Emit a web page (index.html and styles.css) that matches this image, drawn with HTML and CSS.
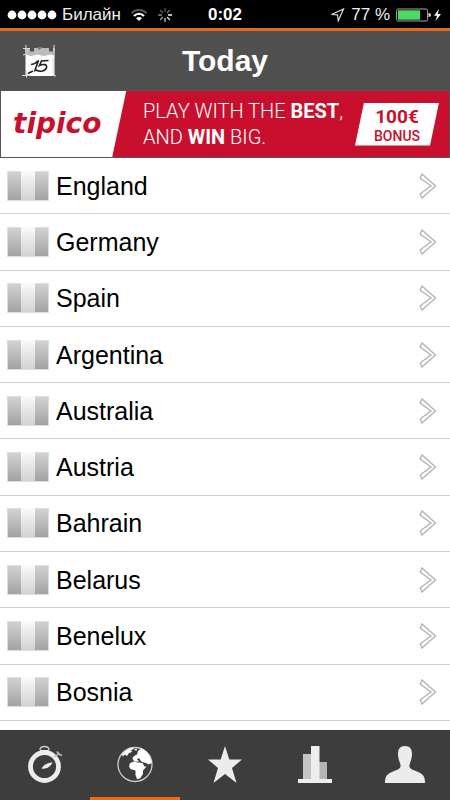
FILE: index.html
```html
<!DOCTYPE html>
<html lang="en">
<head>
<meta charset="utf-8">
<meta name="viewport" content="width=device-width, initial-scale=1">
<title>Today</title>
<link rel="stylesheet" href="styles.css">
</head>
<body>
<div class="status">
  <div class="status-left">
    <svg class="signal" width="48" height="10" viewBox="0 0 48 10" fill="#fff" aria-hidden="true"><circle cx="4" cy="5" r="4.400"/><circle cx="14" cy="5" r="4.400"/><circle cx="24" cy="5" r="4.400"/><circle cx="34" cy="5" r="4.400"/><circle cx="44" cy="5" r="4.400"/></svg>
    <span class="carrier">Билайн</span>
    <svg class="wifi" width="18" height="14" viewBox="0 0 18 14" fill="none" aria-hidden="true"><path d="M1.500 5.200C5.500 1 12.500 1 16.500 5.200" stroke="#555" stroke-width="2"/><path d="M4 8C6.800 5 11.200 5 14 8" stroke="#fff" stroke-width="2.200"/><path d="M6 10.200Q9 7.700 12 10.200L9 13Z" fill="#fff"/></svg>
    <svg width="16" height="16" viewBox="0 0 16 16" stroke-width="1.300" stroke-linecap="round" aria-hidden="true"><path d="M8 1.500V4.500" stroke="#555"/><path d="M12.600 3.400L10.500 5.500" stroke="#777"/><path d="M14.500 8H11.500" stroke="#fff"/><path d="M12.600 12.600L10.500 10.500" stroke="#eee"/><path d="M8 14.500V11.500" stroke="#ccc"/><path d="M3.400 12.600L5.500 10.500" stroke="#aaa"/><path d="M1.500 8H4.500" stroke="#888"/><path d="M3.400 3.400L5.500 5.500" stroke="#666"/></svg>
  </div>
  <time class="clock">0:02</time>
  <div class="status-right">
    <svg width="15" height="14" viewBox="0 0 15 14" fill="none" stroke="#ddd" stroke-width="1.200" aria-hidden="true"><path d="M1.500 6.500L13.500 1L8.200 13L7.600 6.800Z"/></svg>
    <span class="percent">77 %</span>
    <svg width="46" height="14" viewBox="0 0 46 14" aria-hidden="true"><rect x=".6" y="1" width="31" height="12" rx="1.500" fill="none" stroke="#aaa"/><path d="M2 2.300H24V11.700H2Z" fill="#4cd964"/><path d="M32.500 5Q35 5 35 7T32.500 9Z" fill="#ddd"/><path d="M43 1L38 7.700H41L39.600 13L45 6H41.800Z" fill="#fff"/></svg>
  </div>
</div>
<header class="header">
  <button class="calendar" aria-label="Choose date">
    <svg width="34" height="34" viewBox="0 0 34 34" aria-hidden="true"><path d="M3.500 4H32.500V32H3.500Z" fill="#fff"/><path d="M3.500 4H32.500V11.500L28 10.500L22 12L15 10.500L9 12L3.500 10.500Z" fill="#bbb"/><path d="M8 3H12V7.500H8ZM27 3H31V7.500H27Z" fill="#505050"/><path d="M1 4.500H8M1 11L5 10M4 1V8M32 1V7M0 31.500H9M4.500 27V33.500M30 31L34 32M31 14V30" stroke="#ddd" stroke-width="1"/><path d="M15 3L17 6L21 3" fill="#777"/><path d="M9 20.500Q13.500 20 16.500 16.500L12.500 27.500M26.500 16.500L19.500 17L17.500 21.500C21.500 19.500 25.500 20.500 24.500 23.500C23.500 27 18.500 28.500 14 26M6 29.500L11 27" fill="none" stroke="#222" stroke-width="1.600"/></svg>
  </button>
  <h1 class="title">Today</h1>
</header>
<a class="banner" href="#bonus">
  <span class="brand">tipico</span>
  <span class="slogan">PLAY WITH THE <b>BEST</b>,<br>AND <b>WIN</b> BIG.</span>
  <span class="bonus"><b>100€</b><span>BONUS</span></span>
</a>
<main class="main">
  <ul class="list" id="countries"></ul>
</main>
<nav class="tabs" aria-label="Main">
  <a class="tab" href="#live" aria-label="Live"><svg width="36" height="38" viewBox="0 0 36 38" fill="none" aria-hidden="true"><circle cx="17.500" cy="21.500" r="14" stroke="#ececec" stroke-width="4.800"/><path d="M13 5C12.500 .300 22.500 .300 22 5" stroke="#ccc" stroke-width="1.500"/><path d="M13.500 5H21.500L22.500 8H12.500Z" fill="#ececec"/><path d="M27.500 12L32.500 8M30 6.500L31.500 9L35 10.500" stroke="#bbb" stroke-width="1.600"/><path d="M14.500 23.500C16.500 20 20.500 17.500 25.500 17.500C23.500 21.500 19.500 24.500 14.500 23.500Z" fill="#ececec"/></svg></a>
  <a class="tab tab-active" href="#countries" aria-label="Countries" aria-current="page"><svg width="36" height="38" viewBox="0 0 36 38" aria-hidden="true"><circle cx="18" cy="19.500" r="17" fill="none" stroke="#ccc" stroke-width="1.300"/><path d="M5 9C8 5.500 12 3 16 2.700L17 4L14 5L15 7L12 8L10 11L8 9.500L5.500 11.500ZM17 4.500L20 3.500L19.500 6ZM16 15L15.500 12.500L18 10.500L20 9.500L21 6L24 3.500C30 6 34 11 34.800 18L31.500 19.500L29 18L25 17L23.500 15.500L22 13L20 14.500L22.500 16.500H18ZM13 18L17 16.500L21 17.500L25.500 18L27.500 21.500H29.500L26 25.500V29L23 33.500L20 34L18.500 30V25.500L13.500 24L12 21.500Z" fill="#fff"/></svg></a>
  <a class="tab" href="#favorites" aria-label="Favorites"><svg width="36" height="38" viewBox="0 0 36 38" aria-hidden="true"><path d="M18 1L22.300 14.500H35L25 23L29.500 38L18 29L6.500 38L11 23L1 14.500H13.700Z" fill="#ececec"/></svg></a>
  <a class="tab" href="#tables" aria-label="Tables"><svg width="36" height="38" viewBox="0 0 36 38" aria-hidden="true"><path d="M6 9H14V34H6Z" fill="#c4c4c4"/><path d="M22 17H30V34H22Z" fill="#b5b5b5"/><path d="M14 1H22.500V34H14ZM1 34H35V38H1Z" fill="#eee"/></svg></a>
  <a class="tab" href="#profile" aria-label="Profile"><svg width="40" height="38" viewBox="0 0 40 38" aria-hidden="true"><path d="M20 1C15 1 13 4 13 9C13 14 15 17 15.500 20C16 24 13 24.500 8 26.500C2 29 0 31 0 38H40C40 31 38 29 32 26.500C27 24.500 24 24 24.500 20C25 17 27 14 27 9C27 4 25 1 20 1Z" fill="#ececec"/></svg></a>
</nav>
<script src="list.js"></script>
</body>
</html>
```

FILE: styles.css
```css
* {
  box-sizing: border-box;
}

body {
  display: flex;
  flex-direction: column;
  min-height: 100vh;
  margin: 0;
  background: #fff;
  color: #000;
  font-family: "Liberation Sans", Arial, sans-serif;
}

a {
  color: inherit;
  text-decoration: none;
}

svg {
  display: block;
  flex: none;
}

.status {
  display: grid;
  grid-template-columns: 1fr auto 1fr;
  align-items: center;
  height: 31px;
  padding: 0 8px;
  border-bottom: 3px solid #e56a1d;
  background: #000;
  color: #eee;
  font-size: 17px;
  line-height: 30px;
}

.signal {
  overflow: visible;
}

.status-left,
.status-right {
  display: flex;
  align-items: center;
  gap: 6px;
}

.status-right {
  justify-content: flex-end;
}

.wifi {
  margin: 0 3px;
}

.clock {
  color: #fff;
  font-weight: bold;
}

.header {
  display: grid;
  grid-template-columns: 1fr auto 1fr;
  align-items: center;
  height: 59px;
  padding: 0 22px;
  background: #505050;
}

.calendar {
  justify-self: start;
  padding: 0;
  border: 0;
  background: none;
}

.title {
  margin: 0;
  color: #fff;
  font-size: 30px;
  line-height: 58px;
}

.banner {
  display: flex;
  align-items: center;
  height: 68px;
  padding: 0 10px 0 12px;
  border: 1px solid #555;
  background: linear-gradient(102deg, #fff 122px, #c8102e 123px);
  color: #fff;
  font-family: Roboto, sans-serif;
}

.brand {
  width: 130px;
  color: #c8102e;
  font: italic bold 28px/36px "DejaVu Sans", sans-serif;
}

.slogan {
  flex: 1;
  font-size: 20px;
  font-weight: 300;
  line-height: 26px;
  white-space: nowrap;
}

.slogan b {
  font-weight: 700;
}

.bonus {
  display: flex;
  flex-direction: column;
  align-items: center;
  width: 84px;
  padding: 2px 0 1px;
  background: #fff;
  clip-path: polygon(9px 0, 100% 0, calc(100% - 9px) 100%, 0 100%);
  color: #c8102e;
  font-size: 14px;
  font-weight: 500;
  line-height: 17px;
}

.bonus b {
  font-size: 19px;
  font-weight: 700;
  line-height: 23px;
}

.main {
  display: flex;
  flex: 1;
  padding-bottom: 9px;
}

.list {
  display: grid;
  flex: 1;
  grid-auto-rows: 1fr;
  margin: 0;
  padding: 0;
  list-style: none;
}

.row {
  display: flex;
  align-items: center;
  gap: 7px;
  height: 100%;
  padding: 0 13px 0 7px;
  border-bottom: 1px solid #d0d0d0;
  font-size: 25px;
  line-height: 28px;
}

.name {
  flex: 1;
}

.tabs {
  display: grid;
  grid-template-columns: repeat(5, 1fr);
  height: 70px;
  background: #3d3d3d;
}

.tab {
  display: flex;
  align-items: center;
  justify-content: center;
  border-bottom: 3px solid transparent;
}

.tab-active {
  border-bottom-color: #f26a12;
}
```

FILE: list.js
```js
const countries = ["England", "Germany", "Spain", "Argentina", "Australia", "Austria", "Bahrain", "Belarus", "Benelux", "Bosnia"];

const flag = `<svg width="42" height="30" viewBox="0 0 42 30" aria-hidden="true">
  <defs>
    <linearGradient id="band" x2="0" y2="1"><stop stop-color="#d2d2d2"/><stop offset="1" stop-color="#a2a2a2"/></linearGradient>
    <linearGradient id="middle" x2="0" y2="1"><stop stop-color="#fafafa"/><stop offset="1" stop-color="#d2d2d2"/></linearGradient>
  </defs>
  <path d="M0 0H42V30H0Z" fill="#ddd"/>
  <path d="M14 0H28V29H14Z" fill="url(#middle)"/>
  <path d="M1 1H14V29H1ZM28 1H41V29H28Z" fill="url(#band)"/>
</svg>`;

const arrow = `<svg width="18" height="26" viewBox="0 0 18 26" fill="none" stroke="#b4b4b4" stroke-width="1.4" aria-hidden="true">
  <path d="M1 5.5L3 1L16.500 13L3 25L1 20.500M1 5L12 13L1 21"/>
</svg>`;

document.getElementById("countries").innerHTML = countries
  .map((name) => `<li><a class="row" href="#${name}">${flag}<span class="name">${name}</span>${arrow}</a></li>`)
  .join("");
```
